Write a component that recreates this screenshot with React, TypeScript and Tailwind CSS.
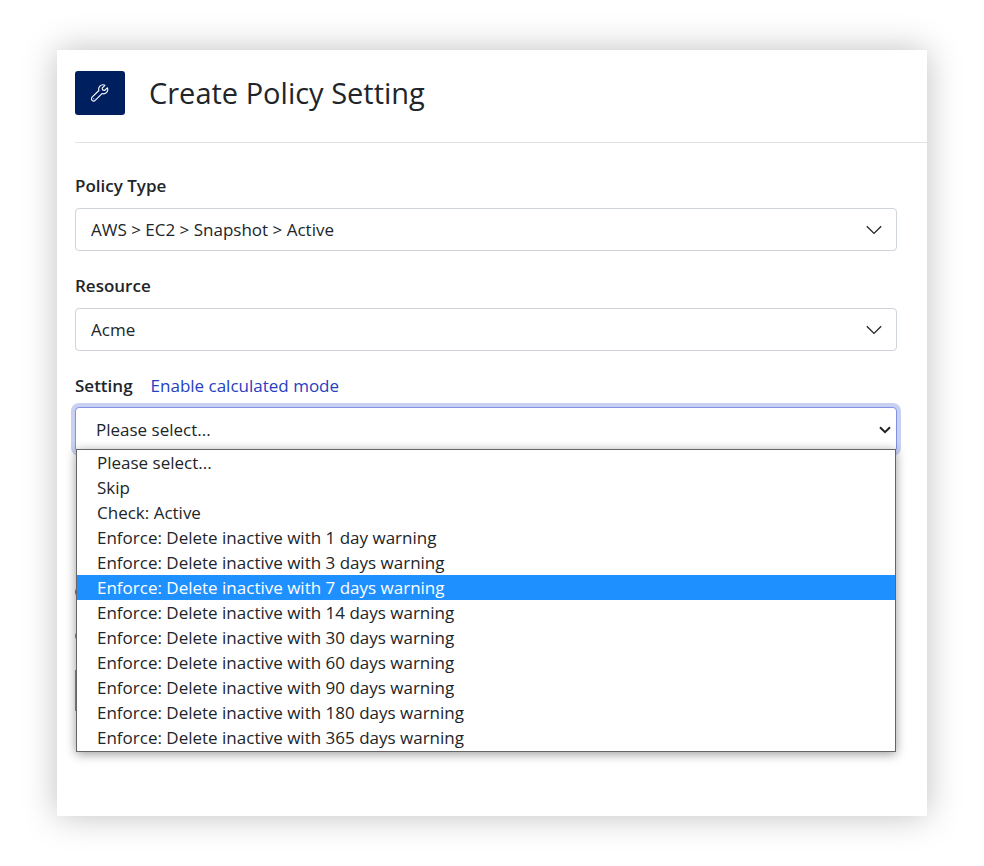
import { useState } from 'react'
import type { ReactNode } from 'react'

const PLACEHOLDER = 'Please select...'

const SETTINGS = [
  PLACEHOLDER,
  'Skip',
  'Check: Active',
  'Enforce: Delete inactive with 1 day warning',
  'Enforce: Delete inactive with 3 days warning',
  'Enforce: Delete inactive with 7 days warning',
  'Enforce: Delete inactive with 14 days warning',
  'Enforce: Delete inactive with 30 days warning',
  'Enforce: Delete inactive with 60 days warning',
  'Enforce: Delete inactive with 90 days warning',
  'Enforce: Delete inactive with 180 days warning',
  'Enforce: Delete inactive with 365 days warning',
]

function WrenchIcon() {
  return (
    <svg
      viewBox="0 0 18 18"
      className="h-[18px] w-[18px]"
      fill="none"
      stroke="currentColor"
      strokeWidth="1.1"
      strokeLinejoin="round"
      aria-hidden="true"
    >
      <path d="M13.9 1.3C12.3.5 10.2.8 8.9 2.1 7.7 3.3 7.4 5 7.9 6.5L1.1 13.2c-.9.9-.9 2.3 0 3.2.9.8 2.3.8 3.1 0l6.8-6.8c1.5.5 3.2.2 4.4-1 1.3-1.3 1.7-3.2.9-4.8L13.6 6.5 11.6 5.9 11.1 4.1Z" />
      <path d="M2.7 14.7h.1" strokeLinecap="round" />
    </svg>
  )
}

function Chevron() {
  return (
    <svg
      viewBox="0 0 16 10"
      className="pointer-events-none absolute top-[17px] right-[15px] h-[10px] w-4"
      fill="none"
      stroke="#212529"
      strokeWidth="1.3"
      aria-hidden="true"
    >
      <path d="M.8 1.2 8 8.4l7.2-7.2" />
    </svg>
  )
}

interface SelectFieldProps {
  id: string
  label: string
  children: ReactNode
}

function SelectField({ id, label, children }: SelectFieldProps) {
  return (
    <div className="mb-[21px]">
      <label htmlFor={id} className="mb-2 block h-7 text-[17px] leading-7 font-semibold">
        {label}
      </label>
      <div className="relative">
        <select
          id={id}
          className="block h-[43px] w-full appearance-none rounded border border-[#ced4da] bg-white px-[15px] text-[17px] outline-none"
        >
          {children}
        </select>
        <Chevron />
      </div>
    </div>
  )
}

export default function App() {
  const [value, setValue] = useState(PLACEHOLDER)
  const [active, setActive] = useState(5)

  return (
    <div className="min-h-screen bg-white px-[57px] py-[50px] font-['Open_Sans','Noto_Sans',sans-serif] text-[#212529]">
      <main className="bg-white pb-[105px] pl-[18px] shadow-[0_0_32px_rgba(0,0,0,0.25)]">
        {/* Header */}
        <header className="flex items-center gap-6 border-b border-[#e2e2e2] pt-[21px] pb-[27px]">
          <div className="flex h-11 w-[50px] items-center justify-center rounded-[3px] bg-[#001f5f] text-white">
            <WrenchIcon />
          </div>
          <h1 className="text-[29px] leading-[44px]">Create Policy Setting</h1>
        </header>

        <form className="pt-[29px] pr-[30px]" onSubmit={(e) => e.preventDefault()}>
          <SelectField id="policy-type" label="Policy Type">
            <option>AWS &gt; EC2 &gt; Snapshot &gt; Active</option>
          </SelectField>

          <SelectField id="resource" label="Resource">
            <option>Acme</option>
          </SelectField>

          {/* Setting */}
          <div className="mb-2 flex h-[27px] items-center gap-[18px] text-[17px] leading-7">
            <label htmlFor="setting" className="font-semibold">
              Setting
            </label>
            <a href="#calculated" className="text-[#2540c0]">
              Enable calculated mode
            </a>
          </div>
          <div className="relative">
            <select
              id="setting"
              value={value}
              onChange={(e) => setValue(e.target.value)}
              className="block h-[45px] w-full appearance-none rounded border border-[#7f92e6] bg-white px-5 text-[17px] shadow-[0_0_0_4px_#c9d0f2] outline-none"
            >
              {SETTINGS.map((option) => (
                <option key={option}>{option}</option>
              ))}
            </select>
            <svg
              viewBox="0 0 12 8"
              className="pointer-events-none absolute top-[19px] right-[6px] h-2 w-3"
              fill="none"
              stroke="#212121"
              strokeWidth="2"
              aria-hidden="true"
            >
              <path d="M1 1.2 6 6.2l5-5" />
            </svg>

            {/* Open option list */}
            <ul
              role="listbox"
              aria-label="Setting"
              className="absolute top-[42px] right-px left-px z-10 border border-[#666] bg-white pb-px text-[17px] leading-[25px] shadow-[0_2px_10px_rgba(0,0,0,0.4)]"
            >
              {SETTINGS.map((option, i) => (
                <li
                  key={option}
                  role="option"
                  aria-selected={i === active}
                  onMouseEnter={() => setActive(i)}
                  onClick={() => setValue(option)}
                  className={
                    i === active
                      ? 'h-[25px] cursor-default bg-[#1e90ff] px-5 text-white'
                      : 'h-[25px] cursor-default px-5'
                  }
                >
                  {option}
                </li>
              ))}
            </ul>
          </div>

          {/* Rows and action bar, mostly covered by the open list */}
          <div className="mt-[134px] h-3 w-3 rounded-full bg-[#6b6f78]" />
          <div className="mt-8 h-3 w-3 rounded-full bg-[#6a78b0]" />
          <div className="mt-7 h-[41px] w-20 bg-[#6f9f80]" />
        </form>
      </main>
    </div>
  )
}
